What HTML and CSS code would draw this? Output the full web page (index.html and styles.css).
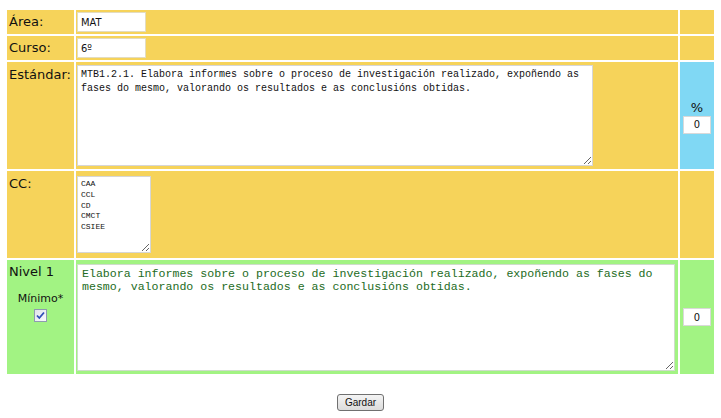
FILE: index.html
```html
<!DOCTYPE html>
<html lang="gl">
<head>
  <meta charset="UTF-8" />
  <title>Estándar</title>
  <link rel="stylesheet" href="styles.css">
</head>
<body>
  <form class="std-form">
    <table class="std-table">
      <colgroup>
        <col class="col-label">
        <col class="col-main">
        <col class="col-side">
      </colgroup>
      <tr class="row-short">
        <td class="label">Área:</td>
        <td class="main"><input type="text" class="field" value="MAT"></td>
        <td class="side"></td>
      </tr>
      <tr class="row-short">
        <td class="label">Curso:</td>
        <td class="main"><input type="text" class="field" value="6º"></td>
        <td class="side"></td>
      </tr>
      <tr class="row-std">
        <td class="label">Estándar:</td>
        <td class="main"><textarea class="std-text">MTB1.2.1. Elabora informes sobre o proceso de investigación realizado, expoñendo as fases do mesmo, valorando os resultados e as conclusións obtidas.</textarea></td>
        <td class="side side-blue">
          <div class="pct">%</div>
          <input type="text" class="small-field" value="0">
        </td>
      </tr>
      <tr class="row-cc">
        <td class="label">CC:</td>
        <td class="main"><textarea class="cc-text">CAA
CCL
CD
CMCT
CSIEE</textarea></td>
        <td class="side"></td>
      </tr>
      <tr class="row-level">
        <td class="label label-green">
          <div>Nivel 1</div>
          <div class="minimo">Mínimo*</div>
          <span class="check">
            <svg width="11" height="11" viewBox="0 0 11 11">
              <path d="M2 5.5 L4.3 8 L9 2.5" fill="none" stroke="#2f4fb8" stroke-width="1.8"/>
            </svg>
          </span>
        </td>
        <td class="main main-green"><textarea class="level-text">Elabora informes sobre o proceso de investigación realizado, expoñendo as fases do mesmo, valorando os resultados e as conclusións obtidas.</textarea></td>
        <td class="side side-green"><input type="text" class="small-field" value="0"></td>
      </tr>
    </table>
    <div class="actions">
      <button type="button" class="save-btn">Gardar</button>
    </div>
  </form>
</body>
</html>
```
FILE: styles.css
```css
* {
  box-sizing: border-box;
}

body {
  margin: 8px 5px;
  font-family: "DejaVu Sans", Verdana, sans-serif;
  font-size: 13px;
  color: #111;
  background: #fff;
}

.std-table {
  width: 711px;
  table-layout: fixed;
  border-collapse: separate;
  border-spacing: 2px;
}

.col-label { width: 67px; }
.col-main { width: 602px; }
.col-side { width: 34px; }

td {
  padding: 0;
  background: #f6d35a;
}

.row-short td { height: 24px; }
.row-std td { height: 107px; }
.row-cc td { height: 87px; }
.row-level td { height: 114px; }

.label {
  vertical-align: top;
  padding: 4px 2px 0;
  line-height: 16px;
  white-space: nowrap;
}

.row-std .label { padding-top: 5px; }
.row-cc .label { padding-top: 5px; }

.main {
  vertical-align: middle;
  padding-left: 1px;
}

.side {
  text-align: center;
  vertical-align: middle;
}

.side-blue {
  background: #80d8f4;
  padding-top: 2px;
}

.label-green,
.main-green,
.side-green {
  background: #a2f383;
}

.field {
  display: block;
  width: 69px;
  height: 20px;
  border: 1px solid #e3dcc0;
  padding: 0 3px;
  font-family: "DejaVu Sans Condensed", "DejaVu Sans", sans-serif;
  font-size: 11px;
  color: #111;
  background: #fff;
}

.small-field {
  width: 28px;
  height: 18px;
  border: 1px solid #d9d9d9;
  padding: 0;
  text-align: center;
  font-family: "DejaVu Sans Condensed", "DejaVu Sans", sans-serif;
  font-size: 11px;
  color: #111;
  background: #fff;
}

.pct {
  font-size: 13px;
  line-height: 15px;
  margin-bottom: 1px;
}

textarea {
  display: block;
  border: 1px solid #d6d6d6;
  background: #fff;
  font-family: "Liberation Mono", "Courier New", monospace;
  margin: 0;
}

.std-text {
  width: 516px;
  height: 101px;
  padding: 2px 3px;
  font-size: 10px;
  line-height: 14px;
  color: #111;
}

.cc-text {
  width: 74px;
  height: 77px;
  padding: 2px 3px;
  font-size: 8px;
  line-height: 10.8px;
  color: #111;
}

.level-text {
  width: 598px;
  height: 107px;
  padding: 2px 4px;
  font-size: 11.6px;
  line-height: 13px;
  color: #236b23;
  border-color: #cfdccb;
}

.minimo {
  margin-top: 12px;
  font-size: 11px;
  line-height: 14px;
  text-align: center;
}

.check {
  display: block;
  width: 13px;
  height: 13px;
  margin: 3px auto 0;
  border: 1px solid #8e9bb0;
  background: linear-gradient(135deg, #dfe3ea, #fafbfd);
}

.check svg {
  display: block;
}

.actions {
  text-align: center;
  margin-top: 18px;
}

.save-btn {
  width: 47px;
  height: 17px;
  padding: 0;
  border: 1px solid #707070;
  border-radius: 3px;
  background: linear-gradient(#f4f4f4, #dcdcdc);
  font-family: "Liberation Sans", Arial, sans-serif;
  font-size: 10px;
  color: #111;
}
```
